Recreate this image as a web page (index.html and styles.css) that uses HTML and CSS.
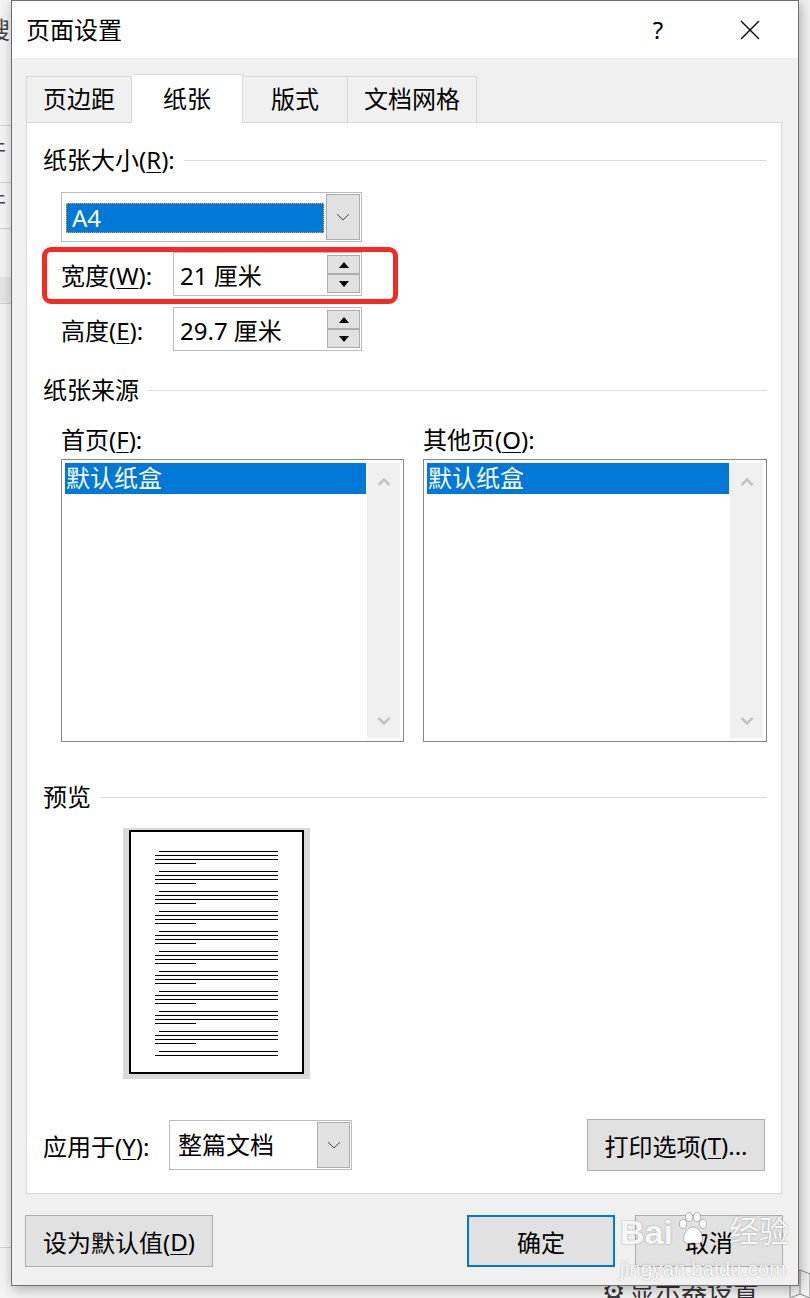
FILE: index.html
```html
<!DOCTYPE html>
<html lang="zh-CN">
<head>
  <meta charset="UTF-8">
  <meta name="viewport" content="width=device-width, initial-scale=1.0">
  <title>页面设置</title>
  <link rel="stylesheet" href="styles.css">
</head>
<body>
  <!-- app window behind the dialog -->
  <div class="backdrop">
    <span class="bg-char bg-search">搜</span>
    <span class="bg-char bg-c1">件</span>
    <span class="bg-char bg-c2">件</span>
    <div class="bg-line bg-l1"></div>
    <div class="bg-line bg-l2"></div>
    <div class="bg-line bg-l3"></div>
    <div class="bg-band"></div>
    <div class="bg-line bg-l4"></div>
    <div class="bg-status"><span class="gear">⚙</span>显示器设置</div>
    <svg class="bg-book" width="24" height="34" viewBox="0 0 24 34">
      <path d="M2 8 L12 4 L22 8 L22 32 L12 28 L2 32 Z M12 4 V28" fill="none" stroke="#8a8a8a" stroke-width="1"/>
    </svg>
  </div>

  <div class="dialog">
    <div class="titlebar">
      <span class="title">页面设置</span>
      <span class="help">?</span>
      <span class="close">
        <svg width="20" height="20" viewBox="0 0 20 20">
          <path d="M1 1 L19 19 M19 1 L1 19" stroke="#000" stroke-width="1.4" fill="none"/>
        </svg>
      </span>
    </div>

    <div class="dialog-body">
      <div class="tabs">
        <div class="tab first">页边距</div>
        <div class="tab active">纸张</div>
        <div class="tab">版式</div>
        <div class="tab">文档网格</div>
      </div>

      <div class="panel">
        <div class="group-title"><span>纸张大小(<u>R</u>):</span><i class="rule"></i></div>

        <div class="combo size-combo">
          <div class="combo-value"><div class="combo-selected">A4</div></div>
          <div class="combo-btn">
            <svg width="14" height="8" viewBox="0 0 14 8"><polyline points="1,1 7,7 13,1" fill="none" stroke="#444" stroke-width="1"/></svg>
          </div>
        </div>

        <div class="field-row first-field">
          <span class="field-label">宽度(<u>W</u>):</span>
          <div class="spin">
            <span class="spin-text">21 厘米</span>
            <div class="spin-btns">
              <div class="spin-btn"><i class="tri-up"></i></div>
              <div class="spin-btn"><i class="tri-down"></i></div>
            </div>
          </div>
        </div>

        <div class="field-row second-field">
          <span class="field-label">高度(<u>E</u>):</span>
          <div class="spin">
            <span class="spin-text">29.7 厘米</span>
            <div class="spin-btns">
              <div class="spin-btn"><i class="tri-up"></i></div>
              <div class="spin-btn"><i class="tri-down"></i></div>
            </div>
          </div>
        </div>

        <div class="highlight"></div>

        <div class="group-title source-title"><span>纸张来源</span><i class="rule"></i></div>

        <div class="two-col list-labels">
          <span>首页(<u>F</u>):</span>
          <span>其他页(<u>O</u>):</span>
        </div>

        <div class="two-col lists">
          <div class="listbox">
            <div class="list-items"><div class="list-item">默认纸盒</div></div>
            <div class="scrollbar">
              <svg width="14" height="10" viewBox="0 0 14 10"><polyline points="1.5,8 7,2.5 12.5,8" fill="none" stroke="#c3c3c3" stroke-width="2.6"/></svg>
              <svg width="14" height="10" viewBox="0 0 14 10"><polyline points="1.5,2 7,7.5 12.5,2" fill="none" stroke="#c3c3c3" stroke-width="2.6"/></svg>
            </div>
          </div>
          <div class="listbox">
            <div class="list-items"><div class="list-item">默认纸盒</div></div>
            <div class="scrollbar">
              <svg width="14" height="10" viewBox="0 0 14 10"><polyline points="1.5,8 7,2.5 12.5,8" fill="none" stroke="#c3c3c3" stroke-width="2.6"/></svg>
              <svg width="14" height="10" viewBox="0 0 14 10"><polyline points="1.5,2 7,7.5 12.5,2" fill="none" stroke="#c3c3c3" stroke-width="2.6"/></svg>
            </div>
          </div>
        </div>

        <div class="group-title preview-title"><span>预览</span><i class="rule"></i></div>

        <div class="preview">
          <svg width="175" height="244" viewBox="0 0 175 244">
            <rect x="1" y="1" width="173" height="242" fill="#fff" stroke="#000" stroke-width="2"/>
            <path fill="none" stroke="#000" stroke-width="1"
              d="M30 21.5H149M26 25.5H149M26 29.5H149M26 33.5H67
                 M30 41.5H149M26 45.5H149M26 49.5H149M26 53.5H67
                 M30 61.5H149M26 65.5H149M26 69.5H149M26 73.5H67
                 M30 81.5H149M26 85.5H149M26 89.5H149M26 93.5H67
                 M30 101.5H149M26 105.5H149M26 109.5H149M26 113.5H67
                 M30 121.5H149M26 125.5H149M26 129.5H149M26 133.5H67
                 M30 141.5H149M26 145.5H149M26 149.5H149M26 153.5H67
                 M30 161.5H149M26 165.5H149M26 169.5H149M26 173.5H67
                 M30 181.5H149M26 185.5H149M26 189.5H149M26 193.5H67
                 M30 201.5H149M26 205.5H149M26 209.5H149M26 213.5H67
                 M30 221.5H149M26 225.5H149"/>
          </svg>
        </div>

        <div class="apply-row">
          <span class="apply-label">应用于(<u>Y</u>):</span>
          <div class="combo apply-combo">
            <span class="combo-text">整篇文档</span>
            <div class="combo-btn">
              <svg width="14" height="8" viewBox="0 0 14 8"><polyline points="1,1 7,7 13,1" fill="none" stroke="#444" stroke-width="1"/></svg>
            </div>
          </div>
          <div class="btn print-btn">打印选项(<u>T</u>)...</div>
        </div>
      </div>

      <div class="footer">
        <div class="btn default-btn">设为默认值(<u>D</u>)</div>
        <div class="btn ok-btn">确定</div>
        <div class="btn cancel-btn">取消</div>
      </div>
    </div>
  </div>

  <!-- watermark over the screenshot -->
  <div class="watermark">
    <div class="wm-logo">
      <span>Bai</span>
      <svg width="32" height="34" viewBox="0 0 32 34">
        <g fill="#fff" stroke="rgba(0,0,0,0.25)" stroke-width="1">
          <ellipse cx="6" cy="12" rx="3.5" ry="4.5"/>
          <ellipse cx="12" cy="5" rx="3.5" ry="4.5"/>
          <ellipse cx="20" cy="5" rx="3.5" ry="4.5"/>
          <ellipse cx="26" cy="12" rx="3.5" ry="4.5"/>
          <path d="M16 15 C10 15 5 24 7 29 C9 33 14 31 16 31 C18 31 23 33 25 29 C27 24 22 15 16 15 Z"/>
        </g>
      </svg>
      <span class="wm-cn">经验</span>
    </div>
    <div class="wm-url">jingyan.baidu.com</div>
  </div>
</body>
</html>
```

FILE: styles.css
```css
* {
  box-sizing: border-box;
}

html,
body {
  margin: 0;
}

body {
  position: relative;
  width: 810px;
  height: 1298px;
  overflow: hidden;
  background-color: #f3f3f3;
  font-family: "Noto Sans", "Noto Sans CJK SC", sans-serif;
  color: #000;
}

u {
  text-decoration: underline;
  text-underline-offset: 3px;
  text-decoration-thickness: 1px;
}

/* backdrop: the Word window behind the dialog */
.backdrop {
  position: absolute;
  inset: 0;
}

.bg-char {
  position: absolute;
  font-size: 24px;
  line-height: 28px;
  color: #444;
}

.bg-search { left: -14px; top: 16px; }
.bg-c1 { left: -16px; top: 134px; font-size: 22px; }
.bg-c2 { left: -16px; top: 186px; font-size: 22px; }

.bg-line {
  position: absolute;
  left: 0;
  width: 12px;
  height: 1px;
  background-color: #cfcfcf;
}

.bg-l1 { top: 125px; }
.bg-l2 { top: 182px; }
.bg-l3 { top: 228px; }
.bg-l4 { top: 1247px; }

.bg-band {
  position: absolute;
  left: 0;
  top: 277px;
  width: 12px;
  height: 27px;
  background-color: #e4e4e4;
  border-bottom: 1px solid #cfcfcf;
}

.bg-status {
  position: absolute;
  left: 602px;
  top: 1274px;
  font-size: 26px;
  line-height: 32px;
  color: #333;
}

.gear {
  margin-right: 4px;
}

.bg-book {
  position: absolute;
  left: 788px;
  top: 1266px;
}

/* dialog window */
.dialog {
  position: absolute;
  left: 11px;
  top: 0;
  width: 788px;
  height: 1286px;
  display: flex;
  flex-direction: column;
  background-color: #f0f0f0;
  border: 1px solid #6f6f6f;
  box-shadow: 2px 3px 12px rgba(0, 0, 0, 0.3);
}

.titlebar {
  display: flex;
  align-items: center;
  height: 57px;
  padding: 0 25px 0 14px;
  background-color: #fff;
}

.title {
  flex: 1;
  font-size: 24px;
  line-height: 30px;
}

.help {
  width: 46px;
  text-align: center;
  font-size: 24px;
  line-height: 30px;
}

.close {
  display: flex;
  justify-content: center;
  width: 46px;
  margin-left: 46px;
}

.dialog-body {
  flex: 1;
  display: flex;
  flex-direction: column;
  padding: 16px 16px 0 14px;
}

/* tabs */
.tabs {
  position: relative;
  z-index: 1;
  display: flex;
  align-items: flex-end;
  height: 48px;
}

.tab {
  min-width: 105px;
  height: 46px;
  padding: 0 16px;
  text-align: center;
  font-size: 24px;
  line-height: 44px;
  border-top: 1px solid #d9d9d9;
  border-right: 1px solid #d9d9d9;
}

.tab.first {
  border-left: 1px solid #d9d9d9;
}

.tab.active {
  min-width: 111px;
  height: 49px;
  margin-bottom: -1px;
  line-height: 48px;
  background-color: #fff;
}

/* page panel */
.panel {
  position: relative;
  padding: 0 14px 22px 16px;
  background-color: #fff;
  border: 1px solid #d9d9d9;
}

.group-title {
  display: flex;
  align-items: center;
  height: 30px;
  margin-top: 22px;
  font-size: 24px;
  line-height: 30px;
}

.rule {
  flex: 1;
  height: 1px;
  margin-left: 9px;
  background-color: #dcdcdc;
}

.combo {
  display: flex;
  background-color: #fff;
  border: 1px solid #bcbcbc;
  padding: 1px;
}

.size-combo {
  width: 301px;
  height: 50px;
  margin: 17px 0 0 18px;
}

.combo-value {
  flex: 1;
  padding: 9px 2px 8px 3px;
}

.combo-selected {
  height: 30px;
  padding-left: 5px;
  font-size: 24px;
  line-height: 28px;
  color: #fff;
  background-color: #0078d7;
  border: 1px dotted #f2a03a;
}

.combo-btn {
  display: flex;
  align-items: center;
  justify-content: center;
  width: 34px;
  background-color: #e1e1e1;
  border: 1px solid #adadad;
}

.field-row {
  display: flex;
  align-items: center;
  height: 44px;
  margin-left: 18px;
}

.first-field {
  margin-top: 10px;
}

.second-field {
  margin-top: 11px;
}

.field-label {
  width: 112px;
  font-size: 24px;
}

.spin {
  display: flex;
  align-items: center;
  width: 189px;
  height: 44px;
  padding: 1px 1px 1px 6px;
  background-color: #fff;
  border: 1px solid #bcbcbc;
  font-size: 24px;
}

.spin-text {
  flex: 1;
}

.spin-btns {
  display: flex;
  flex-direction: column;
  width: 33px;
  height: 100%;
  padding: 1px 0;
}

.spin-btn {
  flex: 1;
  display: flex;
  align-items: center;
  justify-content: center;
  background-color: #e1e1e1;
  border: 1px solid #adadad;
}

.tri-up {
  border-left: 5px solid transparent;
  border-right: 5px solid transparent;
  border-bottom: 6px solid #000;
}

.tri-down {
  border-left: 5px solid transparent;
  border-right: 5px solid transparent;
  border-top: 6px solid #000;
}

.highlight {
  position: absolute;
  left: 15px;
  top: 124px;
  width: 356px;
  height: 57px;
  border: 5px solid #f52a22;
  border-radius: 9px;
}

.source-title {
  margin-top: 24px;
}

.two-col {
  display: grid;
  grid-template-columns: 343px 344px;
  column-gap: 19px;
  margin-left: 18px;
}

.list-labels {
  margin-top: 20px;
  font-size: 24px;
  line-height: 30px;
}

.lists {
  height: 283px;
  margin-top: 4px;
}

.listbox {
  display: flex;
  padding: 3px;
  background-color: #fff;
  border: 1px solid #828790;
}

.list-items {
  flex: 1;
}

.list-item {
  height: 31px;
  padding-left: 1px;
  font-size: 24px;
  line-height: 30px;
  color: #fff;
  background-color: #0078d7;
}

.scrollbar {
  display: flex;
  flex-direction: column;
  align-items: center;
  justify-content: space-between;
  width: 33px;
  margin-left: 1px;
  padding: 14px 0 12px;
  background-color: #f0f0f0;
}

.preview-title {
  margin-top: 40px;
}

.preview {
  width: 187px;
  height: 251px;
  margin: 16px 0 0 80px;
  padding: 2px 6px 5px;
  background-color: #d9d9d9;
}

.preview svg {
  display: block;
}

.apply-row {
  display: flex;
  align-items: center;
  height: 52px;
  margin-top: 40px;
}

.apply-label {
  width: 126px;
  font-size: 24px;
}

.apply-combo {
  width: 183px;
  height: 50px;
  padding: 1px 1px 1px 8px;
}

.combo-text {
  flex: 1;
  font-size: 24px;
  line-height: 46px;
}

.apply-combo .combo-btn {
  width: 33px;
}

.btn {
  display: flex;
  align-items: center;
  justify-content: center;
  height: 52px;
  font-size: 24px;
  background-color: #e1e1e1;
  border: 1px solid #adadad;
}

.print-btn {
  width: 178px;
  margin-left: auto;
  margin-right: 2px;
}

.footer {
  display: flex;
  margin: 21px -1px 0;
}

.default-btn {
  width: 188px;
}

.ok-btn {
  width: 148px;
  margin-left: auto;
  border: 2px solid #0078d7;
}

.cancel-btn {
  width: 148px;
  margin-left: 20px;
}

/* baidu watermark */
.watermark {
  position: absolute;
  left: 620px;
  top: 1206px;
  pointer-events: none;
  color: rgba(255, 255, 255, 0.92);
  text-shadow: 0 0 2px rgba(0, 0, 0, 0.35);
  font-family: "Liberation Sans", "Noto Sans CJK SC", sans-serif;
}

.wm-logo {
  display: flex;
  align-items: flex-end;
  height: 46px;
  font-size: 34px;
  font-weight: bold;
  line-height: 40px;
}

.wm-logo svg {
  margin: 0 2px 6px 4px;
}

.wm-cn {
  margin-left: 18px;
  font-size: 30px;
  font-weight: normal;
}

.wm-url {
  margin-top: 6px;
  font-size: 20px;
  line-height: 22px;
  letter-spacing: 0.3px;
}
```
